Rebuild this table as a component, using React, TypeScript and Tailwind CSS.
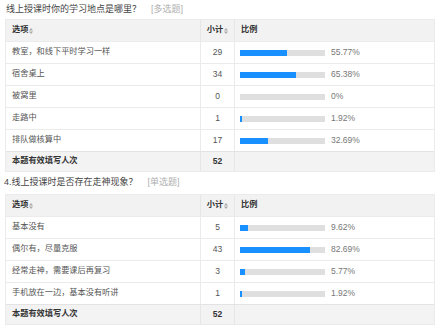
import React from 'react';

type Row = { label: string; count: number; pct: number; text: string };

const q1: Row[] = [
  { label: '教室，和线下平时学习一样', count: 29, pct: 55.77, text: '55.77%' },
  { label: '宿舍桌上', count: 34, pct: 65.38, text: '65.38%' },
  { label: '被窝里', count: 0, pct: 0, text: '0%' },
  { label: '走路中', count: 1, pct: 1.92, text: '1.92%' },
  { label: '排队做核算中', count: 17, pct: 32.69, text: '32.69%' },
];

const q2: Row[] = [
  { label: '基本没有', count: 5, pct: 9.62, text: '9.62%' },
  { label: '偶尔有，尽量克服', count: 43, pct: 82.69, text: '82.69%' },
  { label: '经常走神，需要课后再复习', count: 3, pct: 5.77, text: '5.77%' },
  { label: '手机放在一边，基本没有听讲', count: 1, pct: 1.92, text: '1.92%' },
];

function SortIcon() {
  return (
    <svg width="4" height="6" viewBox="0 0 4 6" className="ml-[1px] inline-block">
      <path d="M2 0 L4 2.4 L0 2.4 Z" fill="#aaa" />
      <path d="M2 6 L4 3.6 L0 3.6 Z" fill="#aaa" />
    </svg>
  );
}

function Table({ rows }: { rows: Row[] }) {
  return (
    <div className="mx-[5px] w-[430px] border border-[#ebebeb] text-[8.2px] text-[#555]">
      <div className="grid h-[21px] grid-cols-[194px_34px_1fr] bg-[#f2f2f2] font-bold text-[#333]">
        <div className="flex items-center pl-[6px]">
          选项<SortIcon />
        </div>
        <div className="flex items-center justify-center border-l border-[#e6e6e6]">
          小计<SortIcon />
        </div>
        <div className="flex items-center border-l border-[#e6e6e6] pl-[6px]">比例</div>
      </div>
      {rows.map((r) => (
        <div key={r.label} className="grid h-[22px] grid-cols-[194px_34px_1fr] border-t border-[#ebebeb] bg-white">
          <div className="flex items-center pl-[6px]">{r.label}</div>
          <div className="flex items-center justify-center border-l border-[#ebebeb] text-[8.5px]">{r.count}</div>
          <div className="flex items-center border-l border-[#ebebeb] pl-[5px]">
            <div className="h-[6px] w-[85px] bg-[#dfdfdf]">
              <div className="h-full bg-[#1890ff]" style={{ width: `${Math.max(r.pct, r.pct > 0 ? 2 : 0)}%` }} />
            </div>
            <span className="ml-[6px] text-[8.5px] text-[#777]">{r.text}</span>
          </div>
        </div>
      ))}
      <div className="grid h-[20px] grid-cols-[194px_34px_1fr] border-t border-[#e3e3e3] bg-[#f3f3f3] font-bold text-[#333]">
        <div className="flex items-center pl-[6px]">本题有效填写人次</div>
        <div className="flex items-center justify-center border-l border-[#e6e6e6] text-[8.5px]">52</div>
        <div className="border-l border-[#e6e6e6]" />
      </div>
    </div>
  );
}

export default function App() {
  return (
    <div
      className="h-[325px] w-[439px] overflow-hidden bg-white"
      style={{ fontFamily: '"Liberation Sans", "Noto Sans CJK SC", sans-serif' }}
    >
      <div className="flex h-[19px] items-center pl-[6px] text-[9px] text-[#444]">
        线上授课时你的学习地点是哪里？
        <span className="ml-[10px] text-[#b0b0b0]">[多选题]</span>
      </div>
      <Table rows={q1} />
      <div className="flex h-[22px] items-center pl-[4px] text-[9px] text-[#444]">
        4.线上授课时是否存在走神现象？
        <span className="ml-[10px] text-[#b0b0b0]">[单选题]</span>
      </div>
      <Table rows={q2} />
    </div>
  );
}
